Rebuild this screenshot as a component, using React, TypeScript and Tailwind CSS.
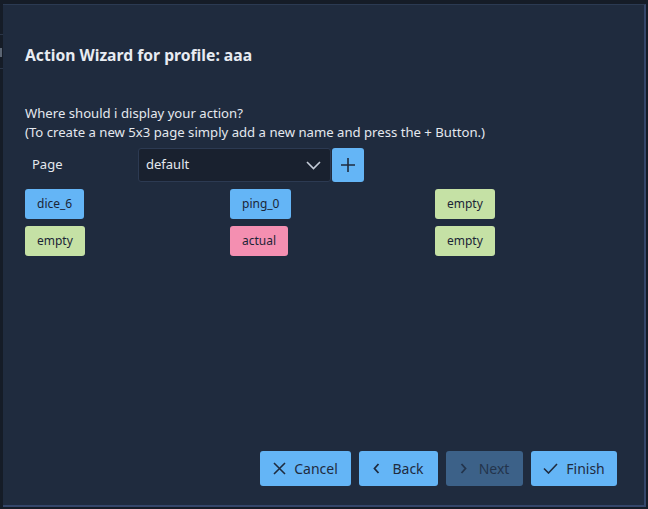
import React from "react";

const font = { fontFamily: '"Noto Sans", "Open Sans", sans-serif' };

function GridBtn({ label, color }: { label: string; color: string }) {
  return (
    <div className={`h-[30px] px-[12px] flex items-center justify-center rounded-[3px] text-[12px] text-[#1b2536] ${color}`}>
      {label}
    </div>
  );
}

export default function App() {
  return (
    <div className="w-[648px] h-[509px] bg-[#151c27] relative overflow-hidden" style={font}>
      <div className="absolute left-0 top-[34px] w-[3px] h-[1px] bg-[#2a3547]" />
      <div className="absolute left-0 top-[68px] w-[3px] h-[1px] bg-[#2a3547]" />
      <div className="absolute left-0 top-[48px] w-[2px] h-[9px] bg-[#5b6573]" />
      <div className="absolute left-[3px] top-[4px] w-[643px] h-[503px] bg-[#1f2b3e] border-t border-[#2b3a52] border-r-2 border-r-[#34466a] border-b-2 border-b-[#34466a] flex flex-col">
        <div className="pl-[22px] pr-[27px] pt-[40px] flex flex-col flex-1">
          <div className="text-[15.7px] leading-[20px] font-bold text-[#e8ecf2]">Action Wizard for profile: aaa</div>
          <div className="mt-[39px] text-[13.15px] leading-[19px] text-[#e4e8ee]">
            <div>Where should i display your action?</div>
            <div>(To create a new 5x3 page simply add a new name and press the + Button.)</div>
          </div>
          <div className="mt-[6px] flex items-center">
            <div className="w-[113px] pl-[7px] text-[13px] text-[#e4e8ee]">Page</div>
            <div className="w-[193px] h-[34px] bg-[#19212f] border border-[#2c3a52] rounded-[3px] flex items-center justify-between pl-[7px] pr-[9px]">
              <span className="text-[13px] text-[#e4e8ee]">default</span>
              <svg width="15" height="9" viewBox="0 0 15 9" fill="none">
                <path d="M1 1l6.5 6.5L14 1" stroke="#c4ccd8" strokeWidth="1.6" />
              </svg>
            </div>
            <div className="ml-[1px] w-[32px] h-[34px] bg-[#64b5f6] rounded-[3px] flex items-center justify-center">
              <svg width="16" height="16" viewBox="0 0 16 16" fill="none">
                <path d="M8 1v14M1 8h14" stroke="#1f2b3e" strokeWidth="1.6" />
              </svg>
            </div>
          </div>
          <div className="mt-[7px] grid grid-cols-[205px_205px_205px] gap-y-[7px] justify-items-start">
            <GridBtn label="dice_6" color="bg-[#64b5f6]" />
            <GridBtn label="ping_0" color="bg-[#64b5f6]" />
            <GridBtn label="empty" color="bg-[#c5e1a5]" />
            <GridBtn label="empty" color="bg-[#c5e1a5]" />
            <GridBtn label="actual" color="bg-[#f48fb1]" />
            <GridBtn label="empty" color="bg-[#c5e1a5]" />
          </div>
          <div className="flex-1" />
          <div className="flex justify-end gap-[8px] pb-[19px]">
            <div className="w-[91px] h-[35px] bg-[#64b5f6] rounded-[3px] flex items-center justify-center gap-[8px] text-[14px] text-[#1f2b3e]">
              <svg width="13" height="13" viewBox="0 0 13 13" fill="none">
                <path d="M1 1l11 11M12 1L1 12" stroke="#1f2b3e" strokeWidth="1.6" />
              </svg>
              <span>Cancel</span>
            </div>
            <div className="w-[79px] h-[35px] bg-[#64b5f6] rounded-[3px] flex items-center justify-center gap-[12px] text-[14px] text-[#1f2b3e]">
              <svg width="7" height="11" viewBox="0 0 7 11" fill="none">
                <path d="M5.5 1L1.5 5.5l4 4.5" stroke="#1f2b3e" strokeWidth="1.8" />
              </svg>
              <span>Back</span>
            </div>
            <div className="w-[77px] h-[35px] bg-[#3c6188] rounded-[3px] flex items-center justify-center gap-[12px] text-[14px] text-[#23344c]">
              <svg width="7" height="11" viewBox="0 0 7 11" fill="none">
                <path d="M1.5 1l4 4.5-4 4.5" stroke="#23344c" strokeWidth="1.8" />
              </svg>
              <span>Next</span>
            </div>
            <div className="w-[86px] h-[35px] bg-[#64b5f6] rounded-[3px] flex items-center justify-center gap-[8px] text-[14px] text-[#1f2b3e]">
              <svg width="15" height="11" viewBox="0 0 15 11" fill="none">
                <path d="M1 5.5l4.5 4.5L14 1" stroke="#1f2b3e" strokeWidth="1.6" />
              </svg>
              <span>Finish</span>
            </div>
          </div>
        </div>
      </div>
    </div>
  );
}
